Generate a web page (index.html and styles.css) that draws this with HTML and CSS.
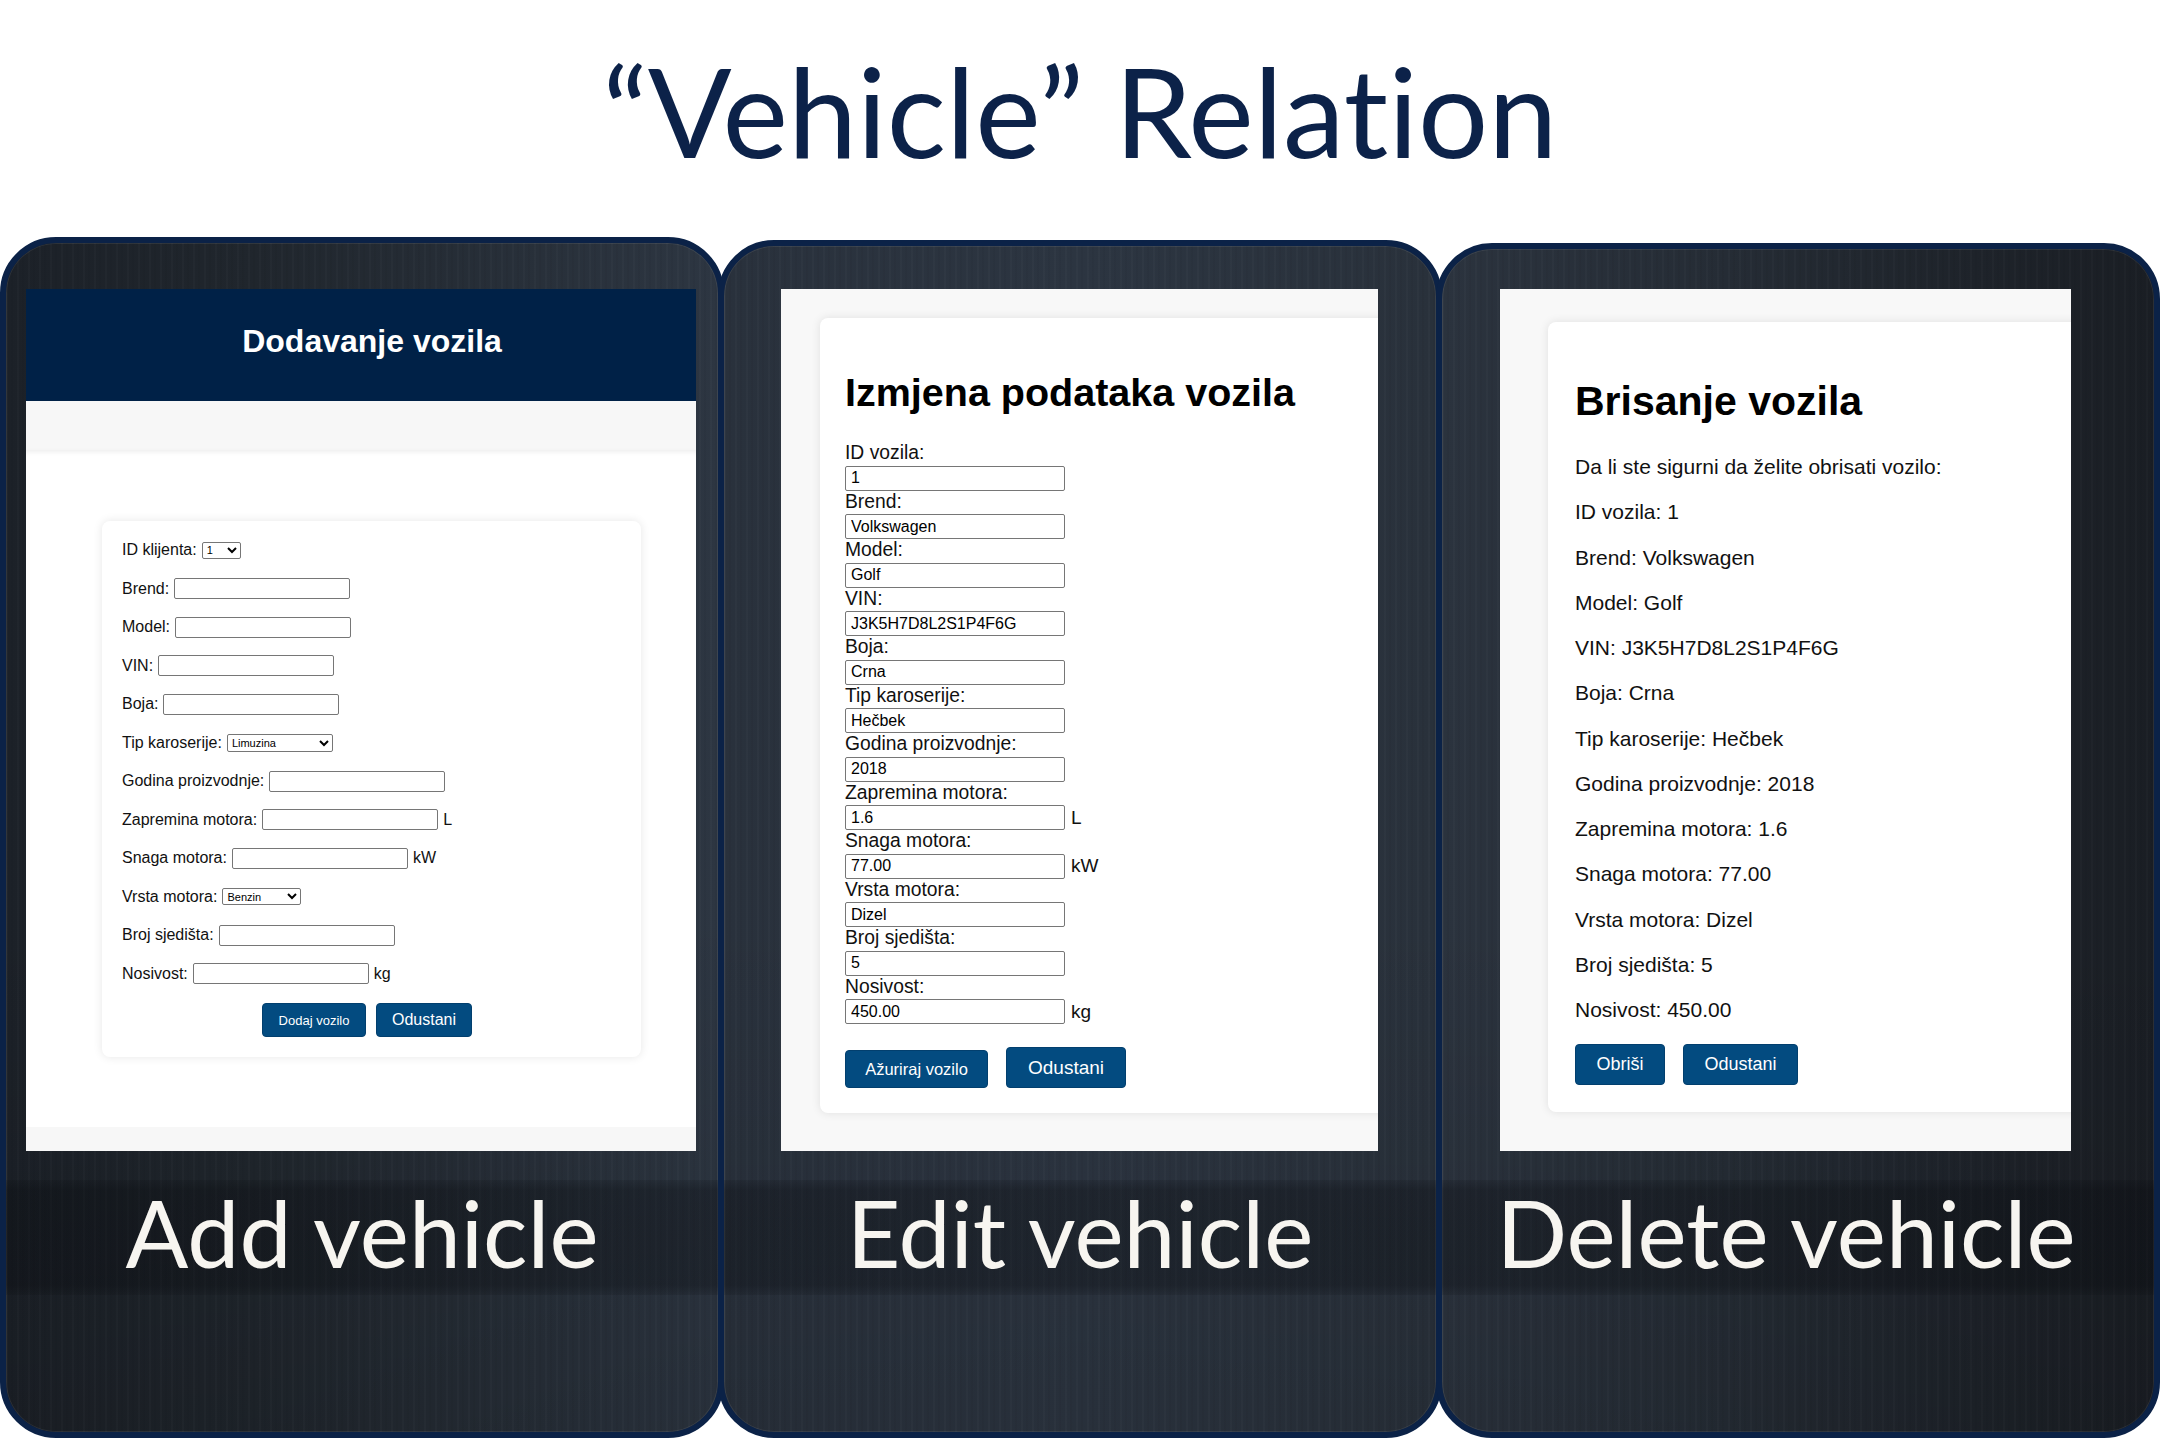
FILE: index.html
```html
<!DOCTYPE html>
<html lang="hr">
<head>
<meta charset="utf-8">
<title>Vehicle Relation</title>
<link rel="stylesheet" href="styles.css">
</head>
<body>
<h1 class="slide-title">“Vehicle” Relation</h1>
<div class="tablets">
  <section class="tablet tablet--add">
    <div class="screen screen--add">
      <header class="add-header"><h2 class="add-heading">Dodavanje vozila</h2></header>
      <div class="add-band"></div>
      <div class="add-main">
        <form class="add-card">
          <div class="add-row"><label class="add-label">ID klijenta:</label><select class="add-select add-select--id"><option>1</option></select></div>
          <div class="add-row"><label class="add-label">Brend:</label><input class="add-input" type="text"></div>
          <div class="add-row"><label class="add-label">Model:</label><input class="add-input" type="text"></div>
          <div class="add-row"><label class="add-label">VIN:</label><input class="add-input" type="text"></div>
          <div class="add-row"><label class="add-label">Boja:</label><input class="add-input" type="text"></div>
          <div class="add-row"><label class="add-label">Tip karoserije:</label><select class="add-select add-select--body"><option>Limuzina</option></select></div>
          <div class="add-row"><label class="add-label">Godina proizvodnje:</label><input class="add-input" type="text"></div>
          <div class="add-row"><label class="add-label">Zapremina motora:</label><input class="add-input" type="text"><span class="add-unit">L</span></div>
          <div class="add-row"><label class="add-label">Snaga motora:</label><input class="add-input" type="text"><span class="add-unit">kW</span></div>
          <div class="add-row"><label class="add-label">Vrsta motora:</label><select class="add-select add-select--fuel"><option>Benzin</option></select></div>
          <div class="add-row"><label class="add-label">Broj sjedišta:</label><input class="add-input" type="text"></div>
          <div class="add-row"><label class="add-label">Nosivost:</label><input class="add-input" type="text"><span class="add-unit">kg</span></div>
          <div class="add-actions">
            <button type="button" class="btn btn--add">Dodaj vozilo</button>
            <button type="button" class="btn btn--cancel1">Odustani</button>
          </div>
        </form>
      </div>
      <div class="add-foot"></div>
    </div>
    <div class="caption">Add vehicle</div>
  </section>

  <section class="tablet tablet--edit">
    <div class="screen screen--edit">
      <div class="edit-card">
        <h2 class="edit-title">Izmjena podataka vozila</h2>
        <div class="edit-field"><label class="edit-label">ID vozila:</label><div class="edit-line"><input class="edit-input" value="1"></div></div>
        <div class="edit-field"><label class="edit-label">Brend:</label><div class="edit-line"><input class="edit-input" value="Volkswagen"></div></div>
        <div class="edit-field"><label class="edit-label">Model:</label><div class="edit-line"><input class="edit-input" value="Golf"></div></div>
        <div class="edit-field"><label class="edit-label">VIN:</label><div class="edit-line"><input class="edit-input" value="J3K5H7D8L2S1P4F6G"></div></div>
        <div class="edit-field"><label class="edit-label">Boja:</label><div class="edit-line"><input class="edit-input" value="Crna"></div></div>
        <div class="edit-field"><label class="edit-label">Tip karoserije:</label><div class="edit-line"><input class="edit-input" value="Hečbek"></div></div>
        <div class="edit-field"><label class="edit-label">Godina proizvodnje:</label><div class="edit-line"><input class="edit-input" value="2018"></div></div>
        <div class="edit-field"><label class="edit-label">Zapremina motora:</label><div class="edit-line"><input class="edit-input" value="1.6"><span class="edit-unit">L</span></div></div>
        <div class="edit-field"><label class="edit-label">Snaga motora:</label><div class="edit-line"><input class="edit-input" value="77.00"><span class="edit-unit">kW</span></div></div>
        <div class="edit-field"><label class="edit-label">Vrsta motora:</label><div class="edit-line"><input class="edit-input" value="Dizel"></div></div>
        <div class="edit-field"><label class="edit-label">Broj sjedišta:</label><div class="edit-line"><input class="edit-input" value="5"></div></div>
        <div class="edit-field"><label class="edit-label">Nosivost:</label><div class="edit-line"><input class="edit-input" value="450.00"><span class="edit-unit">kg</span></div></div>
        <div class="edit-actions">
          <button type="button" class="btn btn--update">Ažuriraj vozilo</button>
          <button type="button" class="btn btn--cancel2">Odustani</button>
        </div>
      </div>
    </div>
    <div class="caption">Edit vehicle</div>
  </section>

  <section class="tablet tablet--del">
    <div class="screen screen--del">
      <div class="del-card">
        <h2 class="del-title">Brisanje vozila</h2>
        <p class="del-line">Da li ste sigurni da želite obrisati vozilo:</p>
        <p class="del-line">ID vozila: 1</p>
        <p class="del-line">Brend: Volkswagen</p>
        <p class="del-line">Model: Golf</p>
        <p class="del-line">VIN: J3K5H7D8L2S1P4F6G</p>
        <p class="del-line">Boja: Crna</p>
        <p class="del-line">Tip karoserije: Hečbek</p>
        <p class="del-line">Godina proizvodnje: 2018</p>
        <p class="del-line">Zapremina motora: 1.6</p>
        <p class="del-line">Snaga motora: 77.00</p>
        <p class="del-line">Vrsta motora: Dizel</p>
        <p class="del-line">Broj sjedišta: 5</p>
        <p class="del-line">Nosivost: 450.00</p>
        <div class="del-actions">
          <button type="button" class="btn btn--delete">Obriši</button>
          <button type="button" class="btn btn--cancel3">Odustani</button>
        </div>
      </div>
    </div>
    <div class="caption caption--del">Delete vehicle</div>
  </section>
</div>
</body>
</html>
```

FILE: styles.css
```css
html, body {
  margin: 0;
  padding: 0;
}
body {
  width: 2160px;
  height: 1440px;
  overflow: hidden;
  background: #ffffff;
  font-family: "Liberation Sans", Arial, sans-serif;
}

/* ---------- slide title ---------- */
.slide-title {
  margin: 0;
  padding-top: 35px;
  height: 150px;
  font-family: Lato, "Open Sans", sans-serif;
  font-weight: 400;
  font-size: 124px;
  line-height: 150px;
  color: #0c2249;
  text-align: center;
  font-variant-ligatures: none;
  font-feature-settings: "liga" 0, "dlig" 0;
}

/* ---------- tablets ---------- */
.tablets {
  display: flex;
  align-items: flex-end;
  height: 1201px;
  margin-top: 52px;
}
.tablet {
  flex: none;
  box-sizing: border-box;
  width: 724px;
  border: 6px solid #0b2247;
  border-radius: 56px;
  display: flex;
  flex-direction: column;
  overflow: hidden;
  box-shadow: inset 0 0 0 1px rgba(255, 255, 255, 0.08);
}
.tablet + .tablet {
  margin-left: -6px;
}
.tablet--add {
  height: 1201px;
  padding-top: 46px;
  background:
    repeating-linear-gradient(90deg, rgba(255,255,255,0.018) 0 2px, rgba(0,0,0,0) 2px 5px, rgba(0,0,0,0.035) 5px 7px, rgba(0,0,0,0) 7px 11px),
    linear-gradient(180deg, rgba(0,0,0,0) 55%, rgba(0,0,0,0.12) 100%),
    linear-gradient(90deg, #1c2128 0%, #20262d 35%, #28303a 75%, #2d3642 100%);
}
.tablet--edit {
  height: 1198px;
  padding-top: 43px;
  background:
    repeating-linear-gradient(90deg, rgba(255,255,255,0.018) 0 2px, rgba(0,0,0,0) 2px 5px, rgba(0,0,0,0.035) 5px 7px, rgba(0,0,0,0) 7px 11px),
    linear-gradient(180deg, rgba(0,0,0,0) 55%, rgba(0,0,0,0.1) 100%),
    linear-gradient(90deg, #29313c 0%, #2c3541 50%, #29313b 100%);
}
.tablet--del {
  height: 1195px;
  padding-top: 40px;
  background:
    repeating-linear-gradient(90deg, rgba(255,255,255,0.018) 0 2px, rgba(0,0,0,0) 2px 5px, rgba(0,0,0,0.035) 5px 7px, rgba(0,0,0,0) 7px 11px),
    linear-gradient(180deg, rgba(0,0,0,0) 55%, rgba(0,0,0,0.1) 100%),
    linear-gradient(90deg, #2b333e 0%, #252c35 40%, #1e232a 75%, #1a1e24 100%);
}

.screen {
  flex: none;
  height: 862px;
  overflow: hidden;
  box-sizing: border-box;
}
.screen--add {
  margin-left: 20px;
  width: 670px;
  background: #ffffff;
  display: flex;
  flex-direction: column;
}
.screen--edit {
  margin-left: 57px;
  width: 597px;
  background: #f8f8f8;
}
.screen--del {
  margin-left: 58px;
  width: 571px;
  background: #f8f8f8;
}

.caption {
  flex: none;
  margin-top: 29px;
  height: 115px;
  font-family: Lato, "Open Sans", sans-serif;
  font-weight: 400;
  font-size: 93px;
  line-height: 104px;
  color: #f7f5f0;
  text-align: center;
  white-space: nowrap;
  font-variant-ligatures: none;
  background: linear-gradient(180deg, rgba(6,8,12,0.12) 0px, rgba(6,8,12,0.32) 10px, rgba(6,8,12,0.32) 105px, rgba(6,8,12,0.12) 115px);
}
.caption--del {
  padding-right: 24px;
}

/* ---------- buttons ---------- */
.btn {
  flex: none;
  margin: 0;
  padding: 0;
  border: 1px solid #023f6e;
  border-radius: 4px;
  background: #034b80;
  color: #ffffff;
  font-family: "Liberation Sans", Arial, sans-serif;
  cursor: pointer;
}

/* ---------- add screen ---------- */
.add-header {
  flex: none;
  height: 112px;
  box-sizing: border-box;
  background: #002147;
  display: flex;
  align-items: center;
  justify-content: center;
  padding-left: 22px;
  padding-bottom: 8px;
}
.add-heading {
  margin: 0;
  font-weight: 700;
  font-size: 32px;
  line-height: 37px;
  color: #ffffff;
}
.add-band {
  flex: none;
  height: 49px;
  background: #f7f7f7;
}
.add-main {
  flex: none;
  height: 677px;
  box-sizing: border-box;
  padding-top: 71px;
  background: #ffffff;
  box-shadow: inset 0 5px 5px -3px rgba(0, 0, 0, 0.07), 0 2px 5px rgba(0, 0, 0, 0.06);
}
.add-foot {
  flex: none;
  height: 24px;
  background: #f7f7f7;
}
.add-card {
  margin: 0 0 0 76px;
  width: 539px;
  height: 536px;
  box-sizing: border-box;
  padding: 10px 20px 20px;
  background: #ffffff;
  border-radius: 8px;
  box-shadow: 0 0 10px rgba(0, 0, 0, 0.1);
}
.add-row {
  height: 38.5px;
  display: flex;
  align-items: center;
  gap: 5px;
  font-size: 16px;
  color: #111111;
}
.add-label {
  white-space: nowrap;
}
.add-input {
  width: 176px;
  height: 21px;
  box-sizing: border-box;
  margin: 0;
  padding: 1px 3px;
  border: 1px solid #767676;
  border-radius: 2px;
  background: #ffffff;
  font-family: "Liberation Sans", Arial, sans-serif;
  font-size: 13px;
}
.add-unit {
  font-size: 16px;
}
.add-select {
  margin: 0;
  height: 18px;
  box-sizing: border-box;
  padding: 0;
  border: 1px solid #767676;
  border-radius: 2px;
  background: #ffffff;
  font-family: "Liberation Sans", Arial, sans-serif;
  font-size: 11px;
  color: #000000;
}
.add-select--id {
  width: 39px;
  height: 17px;
}
.add-select--body {
  width: 106px;
}
.add-select--fuel {
  width: 79px;
  height: 17px;
}
.add-actions {
  display: flex;
  justify-content: center;
  gap: 10px;
  margin-top: 10px;
  padding-right: 9px;
}
.btn--add {
  width: 104px;
  height: 34px;
  font-size: 13px;
}
.btn--cancel1 {
  width: 96px;
  height: 34px;
  font-size: 16px;
}

/* ---------- edit screen ---------- */
.edit-card {
  margin: 29px 0 0 39px;
  width: 640px;
  height: 795px;
  box-sizing: border-box;
  padding: 52px 25px 0;
  background: #ffffff;
  border-radius: 8px;
  box-shadow: 0 0 10px rgba(0, 0, 0, 0.1);
}
.edit-title {
  margin: 0 0 28px;
  font-weight: 700;
  font-size: 39.5px;
  line-height: 44px;
  color: #000000;
  white-space: nowrap;
}
.edit-label {
  display: block;
  font-size: 19.3px;
  line-height: 21.5px;
  color: #111111;
}
.edit-line {
  display: flex;
  align-items: center;
  gap: 6px;
  margin-top: 2px;
  height: 25px;
}
.edit-input {
  width: 220px;
  height: 25px;
  box-sizing: border-box;
  margin: 0;
  padding: 0 5px;
  border: 1px solid #767676;
  border-radius: 2px;
  background: #ffffff;
  font-family: "Liberation Sans", Arial, sans-serif;
  font-size: 16px;
  color: #000000;
}
.edit-unit {
  font-size: 19px;
  color: #111111;
}
.edit-actions {
  display: flex;
  align-items: flex-end;
  gap: 18px;
  margin-top: 23px;
}
.btn--update {
  width: 143px;
  height: 38px;
  font-size: 16.5px;
}
.btn--cancel2 {
  width: 120px;
  height: 41px;
  font-size: 19px;
}

/* ---------- delete screen ---------- */
.del-card {
  margin: 33px 0 0 48px;
  width: 600px;
  height: 790px;
  box-sizing: border-box;
  padding: 56px 27px 0;
  background: #ffffff;
  border-radius: 8px;
  box-shadow: 0 0 10px rgba(0, 0, 0, 0.1);
}
.del-title {
  margin: 0 0 30px;
  font-weight: 700;
  font-size: 41px;
  line-height: 47px;
  color: #000000;
}
.del-line {
  margin: 0;
  font-size: 21px;
  line-height: 24px;
  color: #111111;
}
.del-line + .del-line {
  margin-top: 21.25px;
}
.del-actions {
  display: flex;
  gap: 18px;
  margin-top: 22px;
}
.btn--delete {
  width: 90px;
  height: 41px;
  font-size: 18px;
}
.btn--cancel3 {
  width: 115px;
  height: 41px;
  font-size: 18px;
}
```
